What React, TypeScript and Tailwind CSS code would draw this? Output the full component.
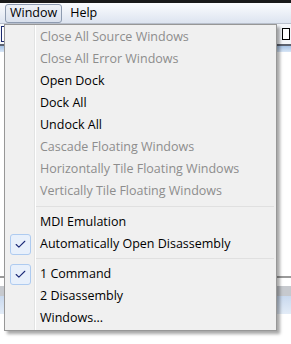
import { Check } from 'lucide-react'

type Item = { label: string; disabled?: boolean; checked?: boolean } | 'sep'

const items: Item[] = [
  { label: 'Close All Source Windows', disabled: true },
  { label: 'Close All Error Windows', disabled: true },
  { label: 'Open Dock' },
  { label: 'Dock All' },
  { label: 'Undock All' },
  { label: 'Cascade Floating Windows', disabled: true },
  { label: 'Horizontally Tile Floating Windows', disabled: true },
  { label: 'Vertically Tile Floating Windows', disabled: true },
  'sep',
  { label: 'MDI Emulation' },
  { label: 'Automatically Open Disassembly', checked: true },
  'sep',
  { label: '1 Command', checked: true },
  { label: '2 Disassembly' },
  { label: 'Windows...' },
]

function MenuRow({ item }: { item: Exclude<Item, 'sep'> }) {
  return (
    <div className="flex h-[22px] items-center">
      <div className="flex w-[30px] justify-center">
        {item.checked && (
          <div className="flex h-[21px] w-[21px] items-center justify-center rounded-[3px] border border-[#aecbf0] bg-[#e8f0fb]">
            <Check size={13} strokeWidth={2} className="text-[#1c2a78]" />
          </div>
        )}
      </div>
      <span className={'pl-[5px] ' + (item.disabled ? 'text-[#8d8d8d]' : 'text-black')}>{item.label}</span>
    </div>
  )
}

export default function App() {
  return (
    <div
      className="relative h-[344px] w-[291px] overflow-hidden bg-white text-[12.5px]"
      style={{ fontFamily: '"Open Sans", "Noto Sans", sans-serif' }}
    >
      {/* title bar edge */}
      <div className="h-[3px] bg-[#1a1a1a]" />
      {/* menu bar */}
      <div className="flex h-[21px] items-center gap-[8px] border-b border-[#b9c0cc] bg-gradient-to-b from-[#fbfcfe] to-[#dde4f0] pl-[5px] text-[12.5px]">
        <div className="flex h-[19px] items-center rounded-[3px] border border-[#8e9bb0] bg-gradient-to-b from-[#eef2f8] to-[#d9e0ec] px-[4px]">
          Window
        </div>
        <span>Help</span>
      </div>

      {/* window content behind the menu */}
      <div className="flex flex-col">
        <div className="flex h-[20px] items-center justify-between bg-[#f4f6fa] px-[1px]">
          <div className="h-[16px] w-[6px] border border-[#1d2a6e] bg-white" />
          <div className="h-[12px] w-[8px] border border-black bg-white" />
        </div>
        <div className="h-[2px] bg-[#5d6370]" />
        <div className="h-[6px] bg-gradient-to-b from-[#a7c3e6] to-[#d8e6f6]" />
        <div className="h-[224px] bg-white" />
        <div className="h-[2px] bg-[#9a9a9a]" />
        <div className="h-[8px] bg-white" />
        <div className="h-[10px] bg-[#c6c9ce]" />
        <div className="h-[18px] bg-gradient-to-b from-[#c9d9ee] to-[#e3ecf7]" />
      </div>

      {/* dropdown */}
      <div className="absolute left-[4px] top-[24px] w-[273px] border border-[#979797] bg-[#f0f0f0] py-[1px] shadow-[3px_3px_3px_rgba(0,0,0,0.35)]">
        <div className="absolute bottom-0 left-[29px] top-0 w-[1px] bg-[#e2e3e3] shadow-[1px_0_0_#ffffff]" />
        <div className="relative flex flex-col">
          {items.map((item, i) =>
            item === 'sep' ? (
              <div key={i} className={(i === 8 ? 'h-[9px]' : 'h-[8px]') + ' flex items-center pl-[31px] pr-[2px]'}>
                <div className="h-[2px] w-full border-t border-[#e0e0e0] border-b-white" />
              </div>
            ) : (
              <MenuRow key={i} item={item} />
            )
          )}
        </div>
      </div>
    </div>
  )
}
